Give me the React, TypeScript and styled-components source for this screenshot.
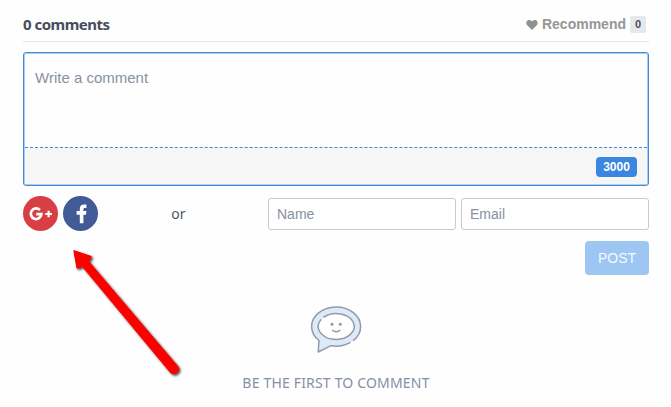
import React from "react";
import styled, { createGlobalStyle } from "styled-components";

const GlobalStyle = createGlobalStyle`
  * { box-sizing: border-box; }
  body { margin: 0; background: #fefefe; font-family: "Liberation Sans", Arial, sans-serif; overflow: hidden; }
`;

const Widget = styled.main`
  position: relative;
  width: 671px;
  height: 407px;
  padding: 8px 22px 0 23px;
`;

const Header = styled.header`
  display: flex;
  align-items: center;
  justify-content: space-between;
  height: 34px;
  padding-right: 3px;
  border-bottom: 1px solid #e4e6ea;
`;

const Title = styled.h2`
  margin: 0 0 2px;
  font: 700 15px/20px "Noto Sans", "Open Sans", sans-serif;
  letter-spacing: -0.5px;
  color: #474d5a;
`;

const Recommend = styled.div`
  display: flex;
  align-items: center;
  font-weight: 700;
  font-size: 14px;
  line-height: 16px;
  color: #969696;

  svg { margin-right: 4px; }
`;

const Label = styled.span`
  margin-bottom: 1px;
`;

const Count = styled.span`
  display: flex;
  align-items: center;
  justify-content: center;
  width: 16px;
  height: 17px;
  margin-left: 4px;
  padding-bottom: 1px;
  border-radius: 2px;
  background: #e6e8ed;
  color: #4d5260;
  font-size: 11px;
`;

const Editor = styled.section`
  display: flex;
  flex-direction: column;
  height: 134px;
  margin-top: 10px;
  border: 1px solid #4488d0;
  border-radius: 3px;
  box-shadow: inset 0 0 0 1px #a9cdf3;
  overflow: hidden;
`;

const Message = styled.div`
  flex: 1;
  padding: 16px 11px;
  font-size: 15px;
  line-height: 18px;
  color: #8792a2;
`;

const EditorFooter = styled.div`
  display: flex;
  align-items: center;
  justify-content: flex-end;
  height: 37px;
  margin: 0 1px 1px;
  padding: 1px 10px 0 0;
  border-top: 1px dashed #4089d8;
  background: #f6f6f6;
`;

const Limit = styled.span`
  width: 41px;
  height: 20px;
  border-radius: 4px;
  background: #3b86df;
  color: #fff;
  font-weight: 700;
  font-size: 12px;
  line-height: 20px;
  text-align: center;
`;

const Identity = styled.div`
  display: flex;
  align-items: center;
  height: 35px;
  margin-top: 10px;
`;

const Social = styled.button<{ $color: string }>`
  width: 35px;
  height: 35px;
  margin-right: 5px;
  padding: 0;
  border: 0;
  border-radius: 50%;
  background: ${({ $color }) => $color};

  svg { display: block; }
`;

const Or = styled.span`
  width: 160px;
  margin-left: 5px;
  padding-right: 19px;
  font: 14px/20px "Noto Sans", "Open Sans", sans-serif;
  color: #50576b;
  text-align: center;
`;

const Field = styled.input`
  width: 188px;
  height: 32px;
  padding: 0 8px;
  border: 1px solid #c8cacd;
  border-radius: 3px;
  background: #fff;
  font: 14px "Liberation Sans", Arial, sans-serif;

  & + & { margin-left: 5px; }
  &::placeholder { color: #8791a1; opacity: 1; }
`;

const Actions = styled.div`
  display: flex;
  justify-content: flex-end;
  margin-top: 10px;
`;

const Post = styled.button`
  width: 64px;
  height: 34px;
  padding: 0;
  border: 0;
  border-radius: 4px;
  background: #9dc6f2;
  color: #f6faff;
  font: 14px "Liberation Sans", Arial, sans-serif;
`;

const Empty = styled.section`
  display: flex;
  flex-direction: column;
  align-items: center;
  margin-top: 31px;
`;

const EmptyText = styled.p`
  margin: 19px 0 0;
  font: 14px/20px "Noto Sans", "Open Sans", sans-serif;
  letter-spacing: 0.18px;
  white-space: nowrap;
  color: #8590a6;
`;

const Pointer = styled.svg`
  position: absolute;
  left: 60px;
  top: 240px;
  pointer-events: none;
`;

function HeartIcon() {
  return (
    <svg width="12" height="12" viewBox="0 0 12 12" fill="#919191">
      <path d="M6 11 1.2 6.3C-.4 4.6.1 1.2 3 1c1.300 0 2.200.7 3 1.300C6.800 1.700 7.700 1 9 1c2.900.2 3.400 3.600 1.800 5.300Z" />
    </svg>
  );
}

function GooglePlusIcon() {
  return (
    <svg width="35" height="35" viewBox="0 0 35 35" fill="none" stroke="#fff">
      <path d="M16.900 14A5.300 5.300 0 1 0 18.400 18.200H13.200" strokeWidth="2.700" />
      <path d="M25.600 14.700v6.600M22.300 18h6.600" strokeWidth="2.200" />
    </svg>
  );
}

function FacebookIcon() {
  return (
    <svg width="35" height="35" viewBox="0 0 35 35" fill="#fff">
      <path d="M16.800 27.300v-8.600h-3.200v-3.600h3.200v-2.300c0-2.900 1.600-4.300 4.300-4.300H23.400v3.400h-1.500c-1.200 0-1.500.5-1.500 1.500v1.700H23.400l-.4 3.600h-2.600v8.600Z" />
    </svg>
  );
}

function BubbleIcon() {
  return (
    <svg width="52" height="48" viewBox="0 0 52 48">
      <path d="M43.500 34.300A24.500 19.500 0 1 0 9 34.500L8.200 46 21 39.700Q33 41.500 43.500 34.300Z" fill="#dceafa" />
      <ellipse cx="26.200" cy="20.500" rx="18" ry="12.900" fill="#fff" />
      <g fill="none" stroke="#929ba4" strokeWidth="1.500" strokeLinecap="round" strokeLinejoin="round">
        <path d="M43.500 34.300A24.500 19.500 0 1 0 9 34.500L8.200 46 21 39.700A24.500 19.500 0 0 0 40 36.600" />
        <path d="M10.900 13.700A18 12.900 0 1 0 14 11" />
        <path d="M22.600 24.200c1.800 2 5.500 2 7.200 0" />
      </g>
      <circle cx="22" cy="18.300" r="1.500" fill="#8f99a4" />
      <circle cx="30.300" cy="18.300" r="1.500" fill="#8f99a4" />
    </svg>
  );
}

function ArrowPointer() {
  return (
    <Pointer width="130" height="145" viewBox="0 0 130 145">
      <defs>
        <filter id="arrow-shadow" x="-20%" y="-20%" width="150%" height="150%">
          <feDropShadow dx="1.500" dy="1.500" stdDeviation="1.300" floodColor="#000" floodOpacity=".75" />
        </filter>
      </defs>
      <path
        d="M13.800 10.600 31.500 16.500 28.500 21.300 117.600 126.200C121 131 114.500 136.500 110.200 132.200L22.300 26.300 17 28.400Z"
        fill="#fc0000"
        stroke="#fc0000"
        strokeWidth="1"
        strokeLinejoin="round"
        filter="url(#arrow-shadow)"
      />
    </Pointer>
  );
}

export default function App() {
  return (
    <>
      <GlobalStyle />
      <Widget>
        <Header>
          <Title>0 comments</Title>
          <Recommend>
            <HeartIcon />
            <Label>Recommend</Label>
            <Count>0</Count>
          </Recommend>
        </Header>
        <Editor>
          <Message>Write a comment</Message>
          <EditorFooter>
            <Limit>3000</Limit>
          </EditorFooter>
        </Editor>
        <Identity>
          <Social $color="#d83f45" aria-label="Google Plus"><GooglePlusIcon /></Social>
          <Social $color="#425b97" aria-label="Facebook"><FacebookIcon /></Social>
          <Or>or</Or>
          <Field placeholder="Name" />
          <Field placeholder="Email" />
        </Identity>
        <Actions>
          <Post>POST</Post>
        </Actions>
        <Empty>
          <BubbleIcon />
          <EmptyText>BE THE FIRST TO COMMENT</EmptyText>
        </Empty>
        <ArrowPointer />
      </Widget>
    </>
  );
}
